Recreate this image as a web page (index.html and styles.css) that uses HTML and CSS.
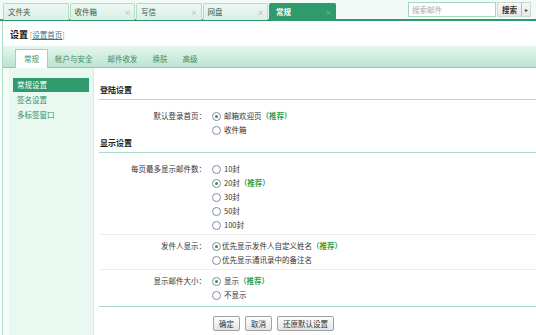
FILE: index.html
```html
<!DOCTYPE html>
<html lang="zh-CN">
<head>
  <meta charset="UTF-8">
  <title>设置</title>
  <link rel="stylesheet" href="styles.css">
</head>
<body>
  <div class="topbar">
    <div class="tabs">
      <div class="tab">文件夹</div>
      <div class="tab">收件箱<span class="close">×</span></div>
      <div class="tab">写信<span class="close">×</span></div>
      <div class="tab">网盘<span class="close">×</span></div>
      <div class="tab active">常规<span class="close">×</span></div>
    </div>
    <div class="search">
      <input type="text" class="search-input" placeholder="搜索邮件">
      <button class="search-btn">搜索</button>
      <span class="search-more">▸</span>
    </div>
  </div>

  <div class="page">
    <div class="title"><b>设置</b> <span class="bracket">[</span><a href="#">设置首页</a><span class="bracket">]</span></div>

    <div class="subtabs">
      <div class="subtab current">常规</div>
      <div class="subtab">帐户与安全</div>
      <div class="subtab">邮件收发</div>
      <div class="subtab">换肤</div>
      <div class="subtab">高级</div>
    </div>

    <div class="main">
      <div class="sidebar">
        <div class="side-item selected">常规设置</div>
        <div class="side-item">签名设置</div>
        <div class="side-item">多标签窗口</div>
      </div>

      <div class="content">
        <div class="section-title">登陆设置</div>
        <div class="row">
          <div class="label">默认登录首页：</div>
          <div class="options">
            <div class="opt"><span class="radio on"></span>邮箱欢迎页<em>（推荐）</em></div>
            <div class="opt"><span class="radio"></span>收件箱</div>
          </div>
        </div>

        <div class="section-title second">显示设置</div>
        <div class="row">
          <div class="label">每页最多显示邮件数：</div>
          <div class="options">
            <div class="opt"><span class="radio"></span>10封</div>
            <div class="opt"><span class="radio on"></span>20封<em>（推荐）</em></div>
            <div class="opt"><span class="radio"></span>30封</div>
            <div class="opt"><span class="radio"></span>50封</div>
            <div class="opt"><span class="radio"></span>100封</div>
          </div>
        </div>
        <div class="row sep">
          <div class="label">发件人显示：</div>
          <div class="options">
            <div class="opt tight"><span class="radio on"></span>优先显示发件人自定义姓名<em>（推荐）</em></div>
            <div class="opt tight"><span class="radio"></span>优先显示通讯录中的备注名</div>
          </div>
        </div>
        <div class="row sep">
          <div class="label">显示邮件大小：</div>
          <div class="options">
            <div class="opt"><span class="radio on"></span>显示<em>（推荐）</em></div>
            <div class="opt"><span class="radio"></span>不显示</div>
          </div>
        </div>

        <div class="actions">
          <button class="btn">确定</button>
          <button class="btn">取消</button>
          <button class="btn">还原默认设置</button>
        </div>
      </div>
    </div>
  </div>
</body>
</html>
```

FILE: styles.css
```css
body {
  margin: 0;
  font-family: "Noto Sans CJK SC", "Liberation Sans", sans-serif;
  font-size: 7.5px;
  color: #333;
  background: #fff;
  width: 536px;
  height: 335px;
  overflow: hidden;
}
.topbar {
  display: flex;
  justify-content: space-between;
  height: 19px;
  background: #f1faf6;
  border-bottom: 2px solid #2f9a6c;
}
.tabs {
  display: flex;
  gap: 1px;
  padding: 3px 0 0 3px;
}
.tab {
  width: 56.5px;
  height: 16px;
  line-height: 16px;
  padding: 0 3px 0 4px;
  display: flex;
  justify-content: space-between;
  background: linear-gradient(#eef8f3, #d9efe5);
  border: 1px solid #b2dcc8;
  border-bottom: none;
  border-radius: 2px 2px 0 0;
  color: #3c5a4c;
}
.tab .close {
  color: #9ab;
  font-size: 7px;
}
.tab.active {
  background: #2f9a6c;
  border-color: #2f9a6c;
  color: #fff;
  font-weight: bold;
  padding-left: 6px;
  width: 56px;
}
.tab.active .close {
  color: #7cc4a2;
  font-weight: normal;
}
.search {
  display: flex;
  align-items: center;
  padding: 2px 5px 0 0;
  height: 15px;
}
.search-input {
  width: 80px;
  height: 13px;
  padding: 0 3px;
  border: 1px solid #a6d6c0;
  font-family: inherit;
  font-size: 7.5px;
  color: #999;
}
.search-input::placeholder {
  color: #aaa;
}
.search-btn {
  height: 15px;
  width: 24px;
  margin-left: 1px;
  padding: 0;
  border: 1px solid #c8ddd2;
  border-right: none;
  background: linear-gradient(#f8f8f8, #e6e6e6);
  font-family: inherit;
  font-size: 7.5px;
  font-weight: bold;
  color: #333;
}
.search-more {
  height: 13px;
  line-height: 13px;
  width: 8px;
  text-align: center;
  border: 1px solid #c8ddd2;
  border-left: 1px solid #9ed39a;
  background: linear-gradient(#f8f8f8, #e6e6e6);
  font-size: 6px;
  color: #444;
}
.page {
  margin-left: 2px;
  border-left: 1px solid #a9dcc6;
  height: 314px;
}
.title {
  padding: 7px 0 0 7px;
  height: 18px;
  line-height: 14px;
}
.title b {
  font-size: 9px;
  color: #111;
}
.title .bracket {
  color: #c9964a;
}
.title a {
  color: #3a6f8a;
}
.subtabs {
  display: flex;
  height: 21px;
  padding: 0 0 0 12px;
  background: linear-gradient(#e6f6ee, #bde4d2);
  border-bottom: 1px solid #8ecaae;
  align-items: flex-end;
}
.subtab {
  padding: 0 7px;
  height: 16px;
  line-height: 16px;
  color: #3e8c64;
  margin-right: 1px;
}
.subtab.current {
  background: #fff;
  border: 1px solid #9fd3ba;
  border-bottom: none;
  padding: 0 8px;
  height: 18px;
  line-height: 18px;
  margin-bottom: -1px;
  margin-right: 0;
}
.main {
  display: flex;
  height: 267px;
}
.sidebar {
  width: 76px;
  padding: 10px 4px 0 4px;
  background: #e9f8f1;
  border-left: 6px solid #f4fbf8;
  border-right: 1px solid #d6e8e0;
}
.side-item {
  height: 14px;
  line-height: 14px;
  padding-left: 4px;
  margin-bottom: 1px;
  color: #3e8c64;
}
.side-item.selected {
  background: #2f9a6c;
  color: #fff;
}
.content {
  flex: 1;
  padding: 15px 0 0 5px;
}
.section-title {
  font-weight: bold;
  font-size: 8px;
  color: #222;
  height: 16px;
  line-height: 13px;
  padding-left: 1px;
  border-bottom: 1px solid #a8dcc8;
  margin-bottom: 9px;
}
.section-title.second {
  margin-top: -1px;
}
.row {
  display: flex;
}
.row.sep {
  border-top: 1px solid #eee;
  margin-top: 2px;
  padding-top: 4px;
}
.label {
  width: 107px;
  text-align: right;
  line-height: 14px;
}
.options {
  padding-left: 6px;
}
.opt {
  display: flex;
  align-items: center;
  height: 14px;
  line-height: 14px;
}
.opt em {
  font-style: normal;
  font-weight: bold;
  color: #2ea04a;
}
.radio {
  width: 7px;
  height: 7px;
  border: 1px solid #7d8fa6;
  border-radius: 50%;
  margin-right: 3px;
  position: relative;
  background: #fff;
}
.radio.on::after {
  content: "";
  position: absolute;
  left: 2px;
  top: 2px;
  width: 3px;
  height: 3px;
  border-radius: 50%;
  background: #2d9a3c;
}
.opt.tight .radio {
  margin-right: 1px;
}
.actions {
  border-top: 1px solid #a8dcc8;
  margin-top: 4px;
  padding: 9px 0 0 114px;
  display: flex;
  gap: 5px;
}
.btn {
  height: 15px;
  padding: 0 5px;
  border: 1px solid #a0a0a0;
  border-radius: 2px;
  background: linear-gradient(#fdfdfd, #e4e4e4);
  font-family: inherit;
  font-size: 7.5px;
  color: #333;
}
```
